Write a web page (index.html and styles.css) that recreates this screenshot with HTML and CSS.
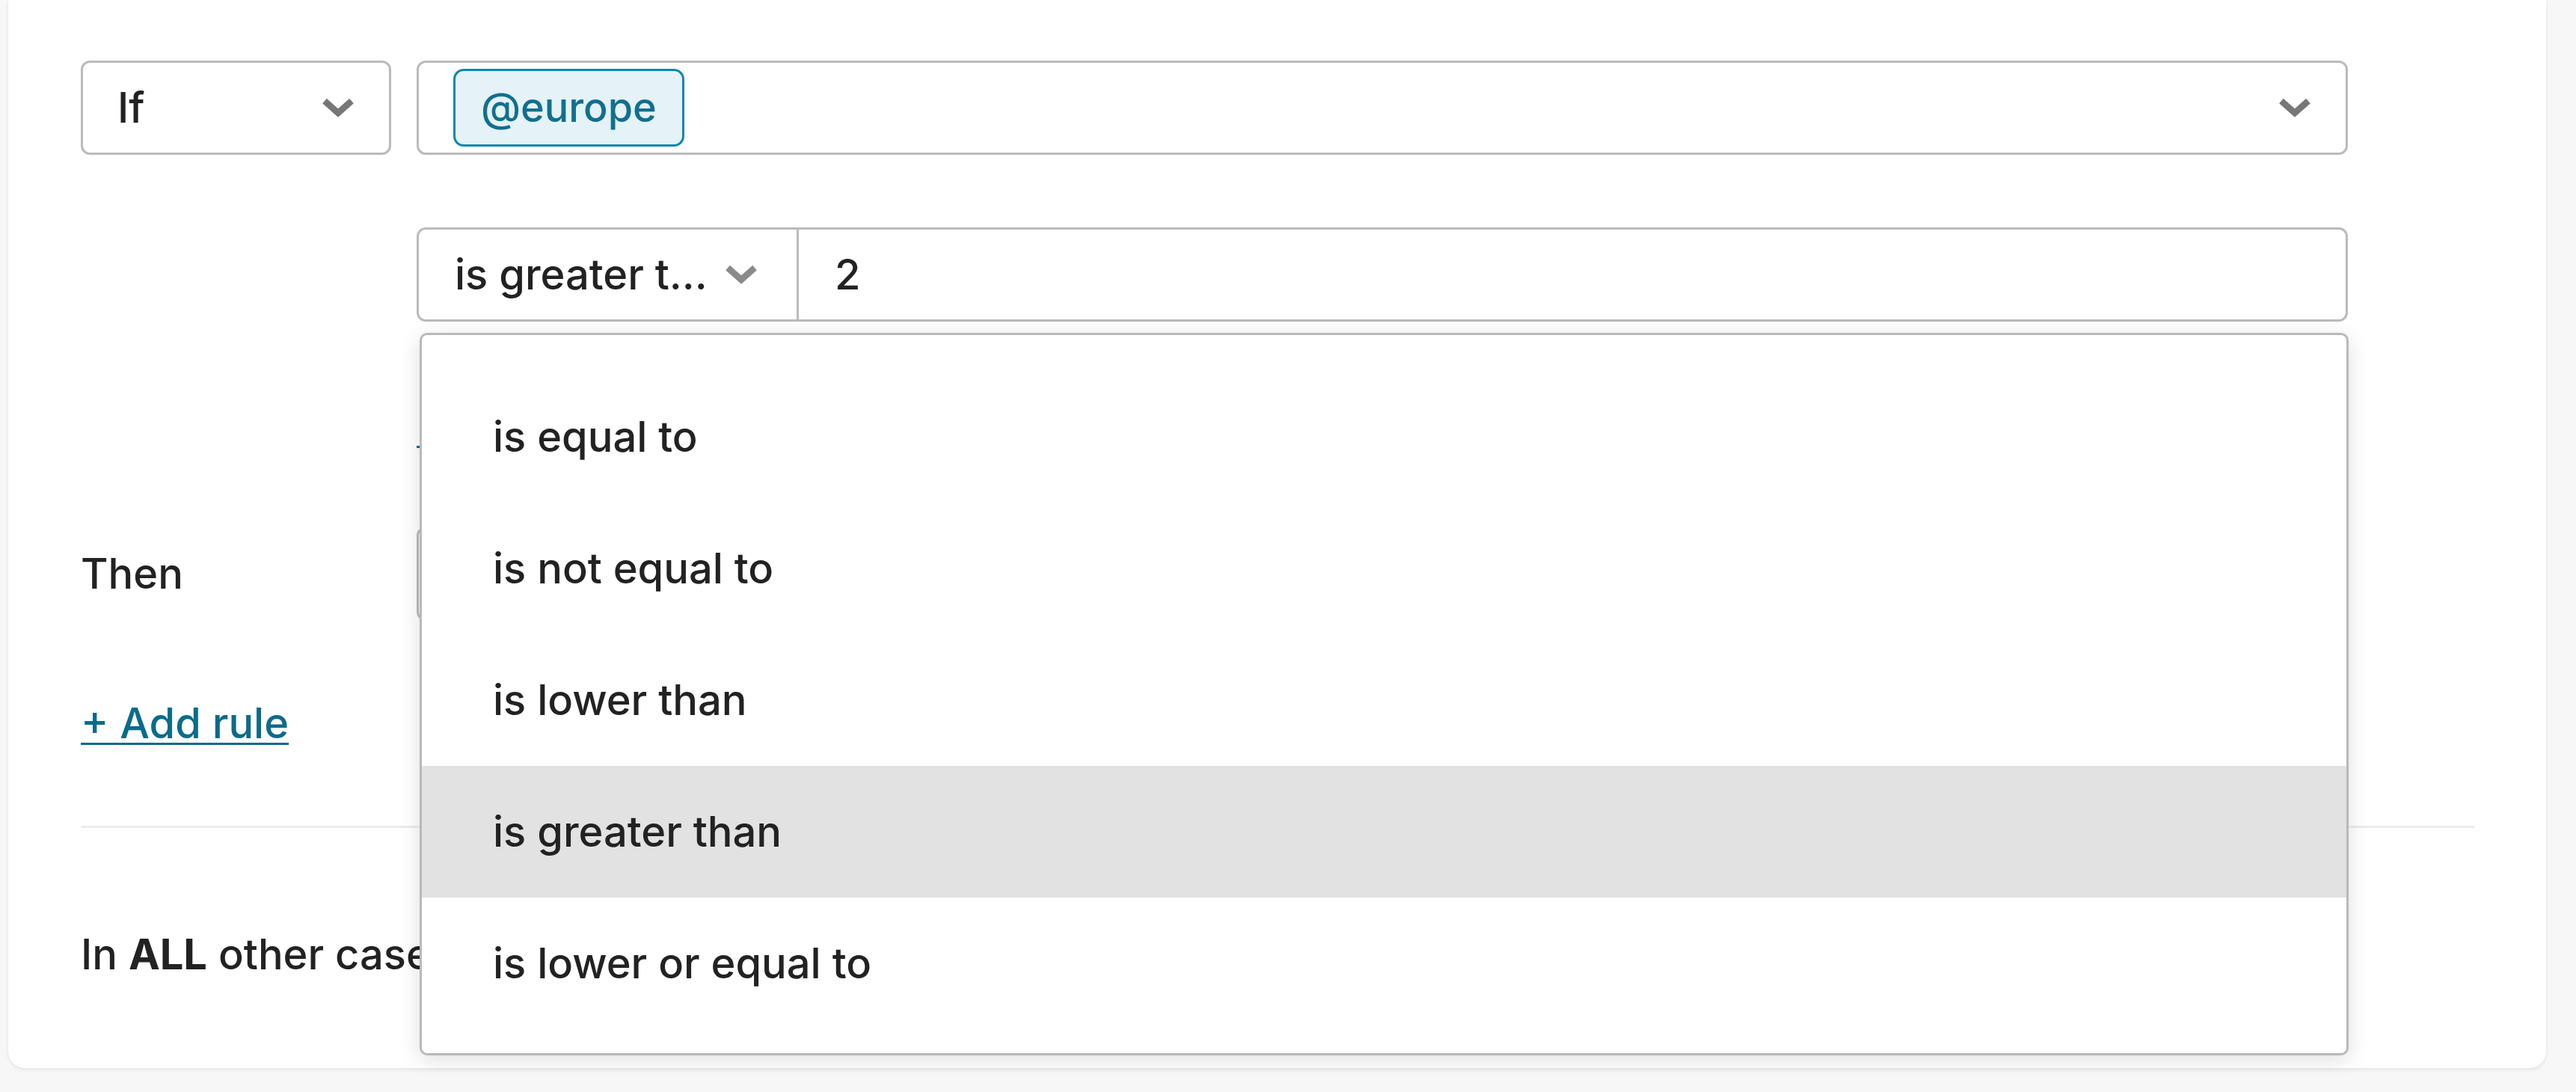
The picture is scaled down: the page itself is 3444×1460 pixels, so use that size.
FILE: index.html
```html
<!DOCTYPE html>
<html lang="en">
<head>
<meta charset="utf-8">
<title>Rules</title>
<link rel="stylesheet" href="styles.css">
</head>
<body>
<div class="card">
  <div class="rule">
    <div class="row">
      <div class="col-label">
        <div class="select">
          <span class="select-text">If</span>
          <svg class="chev" viewBox="0 0 44 26" width="44" height="26"><polyline points="4,4 22,20 40,4"/></svg>
        </div>
      </div>
      <div class="col-main">
        <div class="select">
          <span class="chip">@europe</span>
          <svg class="chev" viewBox="0 0 44 26" width="44" height="26"><polyline points="4,4 22,20 40,4"/></svg>
        </div>
      </div>
    </div>

    <div class="row row-cond">
      <div class="col-label"></div>
      <div class="col-main">
        <div class="cond-wrap">
          <div class="split">
            <div class="split-op">
              <span class="select-text">is greater t...</span>
              <svg class="chev chev-light" viewBox="0 0 44 26" width="44" height="26"><polyline points="4,4 22,20 40,4"/></svg>
            </div>
            <div class="split-val">2</div>
          </div>
          <ul class="dropdown">
            <li class="option">is equal to</li>
            <li class="option">is not equal to</li>
            <li class="option">is lower than</li>
            <li class="option active">is greater than</li>
            <li class="option">is lower or equal to</li>
          </ul>
        </div>
        <a class="link add-cond" href="#">+ Add condition</a>
      </div>
    </div>

    <div class="row row-then">
      <div class="col-label"><span class="label">Then</span></div>
      <div class="col-main">
        <div class="select">
          <span class="select-text"></span>
          <svg class="chev" viewBox="0 0 44 26" width="44" height="26"><polyline points="4,4 22,20 40,4"/></svg>
        </div>
      </div>
    </div>
  </div>

  <a class="link add-rule" href="#">+ Add rule</a>
  <hr class="sep">
  <p class="other">In <b>ALL</b> other cases</p>
</div>
</body>
</html>
```

FILE: styles.css
```css
* { box-sizing: border-box; }

html, body {
  margin: 0;
  padding: 0;
}

body {
  background: #f7f7f7;
  font-family: "Inter", "Liberation Sans", sans-serif;
  font-size: 56px;
  font-weight: 450;
  line-height: 68px;
  color: #222222;
  width: 3444px;
  height: 1460px;
  overflow: hidden;
}

.card {
  margin: 0 0 0 11px;
  width: 3393px;
  background: #fff;
  border-radius: 0 0 22px 22px;
  box-shadow: 0 2px 5px rgba(0, 0, 0, 0.09);
  padding: 81px 96px 118px 97px;
}

.row {
  display: grid;
  grid-template-columns: 415px 2582px;
  column-gap: 34px;
  align-items: start;
}

.row-cond { margin-top: 97px; }
.row-then { margin-top: 100px; }

.col-main { position: relative; }

.select {
  height: 126px;
  border: 3px solid #bbbbbb;
  border-radius: 12px;
  background: #fff;
  display: flex;
  align-items: center;
  justify-content: space-between;
  padding: 0 46px 0 46px;
}

.select-text {
  white-space: nowrap;
}

.chev {
  flex: none;
  display: block;
}
.chev polyline {
  fill: none;
  stroke: #777777;
  stroke-width: 8.5;
  stroke-linejoin: miter;
  stroke-linecap: butt;
}
.chev-light polyline { stroke: #8a8a8a; }

.chip {
  display: inline-flex;
  align-items: center;
  height: 104px;
  padding: 0 34px;
  border: 3px solid #0b87ad;
  border-radius: 14px;
  background: #e5f2f7;
  color: #10708f;
  font-size: 54px;
}

.cond-wrap {
  position: relative;
}

.split {
  height: 126px;
  border: 3px solid #bbbbbb;
  border-radius: 12px;
  display: flex;
  background: #fff;
}

.split-op {
  width: 508px;
  flex: none;
  display: flex;
  align-items: center;
  justify-content: space-between;
  padding: 0 52px 0 48px;
  border-right: 3px solid #bbbbbb;
}

.split-val {
  flex: 1;
  display: flex;
  align-items: center;
  padding-left: 48px;
}

.dropdown {
  position: absolute;
  top: calc(100% + 15px);
  left: 4px;
  right: -1px;
  height: 966px;
  margin: 0;
  list-style: none;
  background: #fff;
  border: 3px solid #b9b9b9;
  border-radius: 10px;
  box-shadow: 0 6px 28px rgba(0, 0, 0, 0.13);
  padding: 48px 0 32px;
  overflow: hidden;
  z-index: 10;
}

.option {
  height: 176px;
  display: flex;
  align-items: center;
  padding-left: 95px;
  color: #222222;
}
.option.active { background: #e2e2e2; }

.link {
  color: #0b6b8b;
  text-decoration: underline;
  text-decoration-thickness: 3px;
  text-underline-offset: 6px;
  display: block;
  width: fit-content;
}

.add-cond { margin-top: 106px; }

.label {
  display: flex;
  align-items: center;
  height: 126px;
}

.add-rule { margin-top: 103px; }

.sep {
  margin: 103px 0 0;
  border: 0;
  height: 3px;
  background: #ececec;
}

.other {
  margin: 135px 0 0;
}
.other b { font-weight: 700; }
```
